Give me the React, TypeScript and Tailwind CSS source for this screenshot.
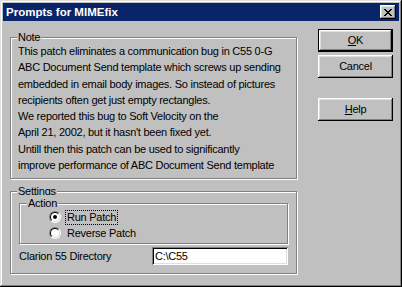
import React from "react";

const raised =
  "shadow-[inset_-1px_-1px_0_#000,inset_1px_1px_0_#fff,inset_-2px_-2px_0_#808080,inset_2px_2px_0_#dfdfdf]";

function CloseGlyph() {
  // 8x7 pixel "x" like the classic caption button
  const rows = ["11....11", ".11..11.", "..1111..", "...11...", "..1111..", ".11..11.", "11....11"];
  return (
    <svg width="8" height="7" viewBox="0 0 8 7" shapeRendering="crispEdges">
      {rows.flatMap((r, y) =>
        r.split("").map((c, x) => (c === "1" ? <rect key={`${x}-${y}`} x={x} y={y} width="1" height="1" fill="#000" /> : null)),
      )}
    </svg>
  );
}

function Group({ label, className, labelLeft = "left-[6px]", children }: { label: string; className: string; labelLeft?: string; children: React.ReactNode }) {
  return (
    <div className={`relative border border-[#808080] shadow-[inset_1px_1px_0_#fff,1px_1px_0_#fff] ${className}`}>
      <span className={`absolute top-[-9px] ${labelLeft} bg-[#c0c0c0] px-[1px] leading-[16px]`}>{label}</span>
      {children}
    </div>
  );
}

function Radio({ checked }: { checked?: boolean }) {
  return (
    <span className="flex h-[12px] w-[12px] items-center justify-center rounded-full border border-t-[#808080] border-l-[#808080] border-b-white border-r-white">
      <span className="flex h-[10px] w-[10px] items-center justify-center rounded-full border border-t-black border-l-black border-b-[#dfdfdf] border-r-[#dfdfdf] bg-white">
        {checked && <span className="h-[4px] w-[4px] rounded-full bg-black" />}
      </span>
    </span>
  );
}

function Button({ children, isDefault }: { children: React.ReactNode; isDefault?: boolean }) {
  if (isDefault) {
    return (
      <div className="h-[23px] w-[75px] border border-black">
        <div className={`flex h-full w-full items-center justify-center ${raised}`}>{children}</div>
      </div>
    );
  }
  return <div className={`flex h-[23px] w-[75px] items-center justify-center ${raised}`}>{children}</div>;
}

const noteLines = [
  "This patch eliminates a communication bug in C55 0-G",
  "ABC Document Send template which screws up sending",
  "embedded in email body images. So instead of pictures",
  "recipients often get just empty rectangles.",
  "We reported this bug to Soft Velocity on the",
  "April 21, 2002, but it hasn't been fixed yet.",
  "Untill then this patch can be used to significantly",
  "improve performance of ABC Document Send template",
];

export default function App() {
  return (
    <div
      className="flex h-[287px] w-[402px] flex-col bg-[#c0c0c0] p-[3px] text-[11px] tracking-[-0.25px] text-black shadow-[inset_-1px_-1px_0_#000,inset_1px_1px_0_#dfdfdf,inset_-2px_-2px_0_#808080,inset_2px_2px_0_#fff]"
      style={{ fontFamily: '"Liberation Sans", Arial, sans-serif' }}
    >
      {/* Caption */}
      <div className="flex h-[18px] items-center justify-between bg-[#0a246a] pl-[3px] pr-[3px]">
        <span className="text-[11.5px] font-bold leading-[18px] tracking-normal text-white">Prompts for MIMEfix</span>
        <div className={`flex h-[14px] w-[16px] items-center justify-center bg-[#c0c0c0] ${raised}`}>
          <CloseGlyph />
        </div>
      </div>

      <div className="flex flex-1">
        {/* Left column */}
        <div className="ml-[7px] w-[287px] pt-[16px]">
          <Group label="Note" className="h-[142px] pl-[7px] pt-[5px]">
            {noteLines.map((l) => (
              <div key={l} className="leading-[16.3px]">
                {l}
              </div>
            ))}
          </Group>

          <Group label="Settings" className="mt-[12px] h-[83px] pl-[8px] pt-[11px]">
            <Group label="Action" labelLeft="left-[7px]" className="h-[41px] w-[269px] pl-[29px] pt-[5px]">
              <div className="flex h-[16px] items-center gap-[5px]">
                <Radio checked />
                <span className="px-[1px] leading-[13px] outline outline-1 outline-dotted outline-black">Run Patch</span>
              </div>
              <div className="flex h-[16px] items-center gap-[5px]">
                <Radio />
                <span className="px-[1px]">Reverse Patch</span>
              </div>
            </Group>
            <div className="mt-[3px] flex h-[18px] items-center">
              <span className="w-[133px]">Clarion 55 Directory</span>
              <div className="flex h-[18px] w-[136px] items-center bg-white pl-[3px] shadow-[inset_1px_1px_0_#808080,inset_-1px_-1px_0_#fff,inset_2px_2px_0_#000,inset_-2px_-2px_0_#dfdfdf]">
                C:\C55
              </div>
            </div>
          </Group>
        </div>

        {/* Right column */}
        <div className="ml-[21px] flex flex-col pt-[8px]">
          <Button isDefault>
            <span>
              <span className="underline">O</span>K
            </span>
          </Button>
          <div className="mt-[3px]">
            <Button>Cancel</Button>
          </div>
          <div className="mt-[20px]">
            <Button>
              <span>
                <span className="underline">H</span>elp
              </span>
            </Button>
          </div>
        </div>
      </div>
    </div>
  );
}
